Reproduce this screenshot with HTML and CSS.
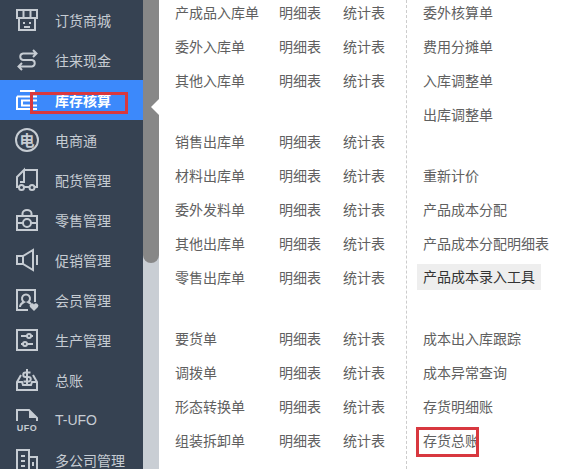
FILE: index.html
```html
<!DOCTYPE html>
<html lang="zh-CN">
<head>
    <meta charset="UTF-8">
    <title>库存核算</title>
    <link rel="stylesheet" href="styles.css">
</head>
<body>
    <div class="page">
        <nav class="sidebar">
            <a class="nav-item">
                <svg class="nav-icon" viewBox="0 0 22 22"><path d="M1 1h20v8H1zM7.500 1v8M14.500 1v8M3 9v12h16V9M8 13v2M14 13v2M8 18h6"/></svg>
                <span>订货商城</span>
            </a>
            <a class="nav-item">
                <svg class="nav-icon" viewBox="0 0 22 22"><path d="M17 1l3.500 3.500L17 8M20 4.500H7a3.300 3.300 0 0 0 0 6.500h9a3.300 3.300 0 0 1 0 6.500H2M6 14l-3.500 3.500L6 21"/></svg>
                <span>往来现金</span>
            </a>
            <a class="nav-item active">
                <svg class="nav-icon" viewBox="0 0 22 22"><path d="M4 2h15M1 7.500h20M1 7.500V20h20M21 11.500H6v5h15"/></svg>
                <span>库存核算</span>
            </a>
            <a class="nav-item">
                <svg class="nav-icon icon-round" viewBox="0 0 24 24"><circle cx="12" cy="12" r="11"/><text class="icon-text" x="12" y="17.500">电</text></svg>
                <span>电商通</span>
            </a>
            <a class="nav-item">
                <svg class="nav-icon" viewBox="0 0 22 22"><path d="M8 1h13v17h-3M3 18H1V8l7-7v12H4M8 18h6"/><circle cx="5.500" cy="18.500" r="2.500"/><circle cx="16" cy="18.500" r="2.500"/></svg>
                <span>配货管理</span>
            </a>
            <a class="nav-item">
                <svg class="nav-icon" viewBox="0 0 22 22"><path d="M1 7h20v14H1zM6.500 7V4.500a4.500 3.500 0 0 1 9 0V7M1 14h6M15 14h6"/><circle cx="11" cy="14" r="4"/></svg>
                <span>零售管理</span>
            </a>
            <a class="nav-item">
                <svg class="nav-icon" viewBox="0 0 22 22"><path d="M1 7h6l10-6v20L7 15H1zM7 7v8M21 6v10"/></svg>
                <span>促销管理</span>
            </a>
            <a class="nav-item">
                <svg class="nav-icon" viewBox="0 0 22 22"><path d="M19 13V1H1v20h11M4 18c0-3 2-4 4-5a4 4 0 1 1 4 0c1 .5 2 1 3 2"/><path class="fill" d="M18 22l-4-4a2.300 2.300 0 0 1 4-2.500 2.300 2.300 0 0 1 4 2.500z"/></svg>
                <span>会员管理</span>
            </a>
            <a class="nav-item">
                <svg class="nav-icon" viewBox="0 0 22 22"><path d="M1 1h20v20H1zM5 7h6M15 7h2M5 15h2M11 15h6"/><circle cx="13" cy="7" r="2"/><circle cx="9" cy="15" r="2"/></svg>
                <span>生产管理</span>
            </a>
            <a class="nav-item">
                <svg class="nav-icon" viewBox="0 0 22 22"><path d="M5 6l-4 7v8h20v-8l-4-7M1 13h5l1 3h8l1-3h5M14.500 3.500h-5a2 2 0 0 0 0 4.500h3a2 2 0 0 1 0 4.500H7.500M11 0v15"/></svg>
                <span>总账</span>
            </a>
            <a class="nav-item">
                <svg class="nav-icon" viewBox="0 0 22 22"><path d="M1 12V1h12l8 8v3"/><path class="fill" d="M13 1l8 8h-8z"/><text class="ufo" x="11" y="22">UFO</text></svg>
                <span>T-UFO</span>
            </a>
            <a class="nav-item">
                <svg class="nav-icon" viewBox="0 0 22 22"><path d="M1 1h12v21H1zM13 8h8v14h-8M5 7h4M5 12h4M5 17h4M17 13v4"/></svg>
                <span>多公司管理</span>
            </a>
        </nav>

        <div class="scrollbar"><div class="scroll-thumb"></div></div>

        <main class="menu">
            <div class="menu-col menu-col-left">
                <section class="menu-group">
                    <div class="menu-row"><a>产成品入库单</a><a>明细表</a><a>统计表</a></div>
                    <div class="menu-row"><a>委外入库单</a><a>明细表</a><a>统计表</a></div>
                    <div class="menu-row"><a>其他入库单</a><a>明细表</a><a>统计表</a></div>
                </section>
                <section class="menu-group">
                    <div class="menu-row"><a>销售出库单</a><a>明细表</a><a>统计表</a></div>
                    <div class="menu-row"><a>材料出库单</a><a>明细表</a><a>统计表</a></div>
                    <div class="menu-row"><a>委外发料单</a><a>明细表</a><a>统计表</a></div>
                    <div class="menu-row"><a>其他出库单</a><a>明细表</a><a>统计表</a></div>
                    <div class="menu-row"><a>零售出库单</a><a>明细表</a><a>统计表</a></div>
                </section>
                <section class="menu-group">
                    <div class="menu-row"><a>要货单</a><a>明细表</a><a>统计表</a></div>
                    <div class="menu-row"><a>调拨单</a><a>明细表</a><a>统计表</a></div>
                    <div class="menu-row"><a>形态转换单</a><a>明细表</a><a>统计表</a></div>
                    <div class="menu-row"><a>组装拆卸单</a><a>明细表</a><a>统计表</a></div>
                </section>
            </div>
            <div class="menu-col menu-col-right">
                <section class="menu-group">
                    <div class="menu-row"><a>委外核算单</a></div>
                    <div class="menu-row"><a>费用分摊单</a></div>
                    <div class="menu-row"><a>入库调整单</a></div>
                    <div class="menu-row"><a>出库调整单</a></div>
                </section>
                <section class="menu-group">
                    <div class="menu-row"><a>重新计价</a></div>
                    <div class="menu-row"><a>产品成本分配</a></div>
                    <div class="menu-row"><a>产品成本分配明细表</a></div>
                    <div class="menu-row"><a class="hover">产品成本录入工具</a></div>
                </section>
                <section class="menu-group">
                    <div class="menu-row"><a>成本出入库跟踪</a></div>
                    <div class="menu-row"><a>成本异常查询</a></div>
                    <div class="menu-row"><a>存货明细账</a></div>
                    <div class="menu-row"><a>存货总账</a></div>
                </section>
            </div>
        </main>

        <div class="mark mark-nav"></div>
        <div class="mark mark-menu"></div>
    </div>
</body>
</html>
```

FILE: styles.css
```css
* {
    margin: 0;
    padding: 0;
    box-sizing: border-box;
}

html, body {
    height: 100%;
    overflow: hidden;
}

body {
    font-family: "Liberation Sans", "Noto Sans CJK SC", sans-serif;
    font-size: 14px;
    background: #ffffff;
}

.page {
    position: relative;
    display: flex;
    height: 469px;
    overflow: hidden;
}

/* left nav */
.sidebar {
    width: 143px;
    flex-shrink: 0;
    background: #364252;
}

.nav-item {
    display: flex;
    align-items: center;
    height: 40px;
    padding-left: 16px;
    color: #c6ccd3;
}

.nav-item span {
    margin-left: 17px;
    white-space: nowrap;
}

.nav-item.active {
    position: relative;
    background: #3c89fb;
    color: #ffffff;
    font-weight: bold;
}

.nav-item.active::after {
    content: "";
    position: absolute;
    left: 151px;
    top: 19px;
    border: 8px solid transparent;
    border-left: 0;
    border-right-color: #ffffff;
}

.nav-icon {
    width: 22px;
    height: 22px;
    flex-shrink: 0;
    overflow: visible;
    fill: none;
    stroke: currentColor;
    stroke-width: 2;
}

.icon-round {
    width: 24px;
    height: 24px;
    margin: 0 -1px;
}

.nav-icon .fill {
    fill: currentColor;
    stroke: none;
}

.nav-icon .icon-text {
    fill: currentColor;
    stroke: none;
    font-size: 15px;
    font-weight: bold;
    text-anchor: middle;
}

.nav-icon .ufo {
    fill: currentColor;
    stroke: none;
    font-size: 9px;
    font-weight: bold;
    letter-spacing: 0.5px;
    text-anchor: middle;
}

/* scrollbar next to the nav */
.scrollbar {
    width: 16px;
    flex-shrink: 0;
    background: #c9ced4;
}

.scroll-thumb {
    height: 263px;
    background: #878787;
    border-radius: 0 0 8px 8px;
}

/* menu area */
.menu {
    display: flex;
    flex: 1;
    margin-top: -5px;
    color: #606060;
}

.menu-col-left {
    width: 248px;
    padding-left: 16px;
    border-right: 1px dashed #cccccc;
}

.menu-col-right {
    padding-left: 16px;
}

.menu-group {
    margin-bottom: 27px;
}

.menu-row {
    display: flex;
    align-items: center;
    height: 34px;
}

.menu-row a {
    white-space: nowrap;
}

.menu-col-left .menu-row a:first-child {
    width: 104px;
}

.menu-col-left .menu-row a:nth-child(2) {
    width: 64px;
}

.menu-row a.hover {
    padding: 0 6px;
    margin-left: -6px;
    line-height: 26px;
    background: #eeeeee;
    color: #333333;
}

/* red annotation boxes on the screenshot */
.mark {
    position: absolute;
    border: 3px solid #d8383f;
}

.mark-nav {
    left: 30px;
    top: 92px;
    width: 98px;
    height: 22px;
}

.mark-menu {
    left: 416px;
    top: 427px;
    width: 63px;
    height: 30px;
}
```
